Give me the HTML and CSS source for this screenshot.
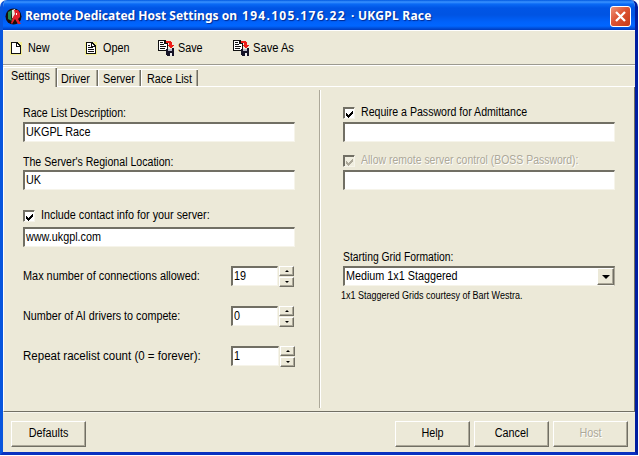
FILE: index.html
```html
<!DOCTYPE html>
<html lang="en">
<head>
<meta charset="utf-8">
<title>Remote Dedicated Host Settings</title>
<link rel="stylesheet" href="styles.css">
</head>
<body>
<svg class="defs" aria-hidden="true">
  <symbol id="new-page" viewBox="0 0 12 14" shape-rendering="crispEdges">
    <path d="M0 1h12v13H0z" fill="#f4ee94"/>
    <path d="M1 1h6l4 4v8H1z" fill="#111"/><path d="M2 2h4v4h4v6H2z" fill="#fff"/><path d="M7 3h1v1h1v1H7z" fill="#fff"/>
  </symbol>
  <symbol id="open-page" viewBox="0 0 12 14" shape-rendering="crispEdges">
    <path d="M0 1h12v13H0z" fill="#f4ee94"/>
    <path d="M1 1h6l4 4v8H1z" fill="#111"/><path d="M2 2h4v4h4v6H2z" fill="#fff"/><path d="M7 3h1v1h1v1H7z" fill="#fff"/>
    <path d="M3 4h2v1H3zM3 6h5v1H3zM3 8h6v1H3zM3 10h6v1H3z" fill="#111"/>
  </symbol>
  <symbol id="save-page" viewBox="0 0 17 16" shape-rendering="crispEdges">
    <path d="M0 0h7l3 3v8H0z" fill="#111"/><path d="M1 1h5v3h3v6H1z" fill="#fff"/>
    <path d="M2 2h3v1H2zM2 4h4v1H2zM2 6h6v1H2zM2 8h5v1H2z" fill="#111"/>
    <path d="M8 1h4l2 2v2h2l-3 4-4-4h2V3H8z" fill="#ed1c18"/>
    <path d="M8 9h1V8h1v3h4V8h2v8H9l-1-1z" fill="#151326"/><path d="M10 9h4v2h-4z" fill="#b9b9c8"/><path d="M12 13h2v3h-2z" fill="#eee"/>
  </symbol>
  <symbol id="tick" viewBox="0 0 7 7"><path d="M0 2v3l2 2 5-5V-1L2 4z" fill="currentColor" shape-rendering="crispEdges"/></symbol>
</svg>
<main class="window">
  <header class="titlebar">
    <svg class="app-icon" viewBox="0 0 17 17">
      <circle cx="8.5" cy="8.5" r="8" fill="#170d0d"/>
      <path d="M3 4l4-2-1 7 1 4-4-2z" fill="#23864a"/><path d="M7 2l3-1 1 3-1 7-3-1z" fill="#e9e5dc"/>
      <path d="M9 2l4 0 2 3v4l-2 2 3 5-3 0-3-5-3 5-1-1 2-6 2-3z" fill="#e2202c"/><path d="M11 5h1v2h-1z" fill="#fff"/>
    </svg>
    <h1><span class="t-name">Remote Dedicated Host Settings on</span><span class="t-ip">194.105.176.22</span><span class="t-race">· UKGPL Race</span></h1>
    <button class="close" aria-label="Close"><svg viewBox="0 0 19 19"><path d="M5 5l9 9M14 5l-9 9" stroke="#fff" stroke-width="2.3"/></svg></button>
  </header>
  <nav class="toolbar">
    <a class="tool tool-new"><svg class="page"><use href="#new-page"/></svg><span>New</span></a>
    <a class="tool tool-open"><svg class="page"><use href="#open-page"/></svg><span>Open</span></a>
    <a class="tool tool-save"><svg class="disk"><use href="#save-page"/></svg><span>Save</span></a>
    <a class="tool tool-saveas"><svg class="disk"><use href="#save-page"/></svg><span>Save As</span></a>
  </nav>
  <div class="tabs">
    <div class="tab active"><span>Settings</span></div>
    <div class="tab driver"><span>Driver</span></div>
    <div class="tab server"><span>Server</span></div>
    <div class="tab races"><span>Race List</span></div>
    <div class="tab-rest"></div>
  </div>
  <section class="panel">
    <div class="col left">
      <div class="label l-desc"><span>Race List Description:</span></div>
      <div class="field"><span>UKGPL Race</span></div>
      <div class="label second l-region"><span>The Server's Regional Location:</span></div>
      <div class="field"><span>UK</span></div>
      <div class="check contact"><i class="box"><svg><use href="#tick"/></svg></i><span>Include contact info for your server:</span></div>
      <div class="field url"><span>www.ukgpl.com</span></div>
      <div class="count"><span class="c-max">Max number of connections allowed:</span><div class="field"><span>19</span></div><div class="spin"><i class="up"></i><i class="down"></i></div></div>
      <div class="count"><span class="c-ai">Number of AI drivers to compete:</span><div class="field"><span>0</span></div><div class="spin"><i class="up"></i><i class="down"></i></div></div>
      <div class="count last"><span class="c-rep">Repeat racelist count (0 = forever):</span><div class="field"><span>1</span></div><div class="spin"><i class="up"></i><i class="down"></i></div></div>
    </div>
    <div class="divider"></div>
    <div class="col right">
      <div class="check require"><i class="box"><svg><use href="#tick"/></svg></i><span>Require a Password for Admittance</span></div>
      <div class="field"></div>
      <div class="check boss disabled"><i class="box"><svg><use href="#tick"/></svg></i><span>Allow remote server control (BOSS Password):</span></div>
      <div class="field"></div>
      <div class="label grid-label"><span>Starting Grid Formation:</span></div>
      <div class="field select"><span>Medium 1x1 Staggered</span><i class="drop"></i></div>
      <div class="note"><span>1x1 Staggered Grids courtesy of Bart Westra.</span></div>
    </div>
  </section>
  <footer class="footer">
    <button class="btn defaults"><span>Defaults</span></button>
    <button class="btn"><span>Help</span></button>
    <button class="btn"><span>Cancel</span></button>
    <button class="btn" disabled><span>Host</span></button>
  </footer>
</main>
</body>
</html>
```
FILE: styles.css
```css
* { box-sizing: border-box; }
body { margin: 0; background: #fff; font: 12px/14px "Liberation Sans", Arial, sans-serif; color: #000; overflow: hidden; }
.defs { display: none; }
span { display: block; white-space: nowrap; transform: scaleX(.9); transform-origin: left; }
.window {
  width: 638px; height: 455px; display: flex; flex-direction: column;
  border: solid; border-width: 0 3px 3px; border-color: #0831d9 #001ea0 #0831c0 #0855dd;
  border-radius: 7px 7px 0 0; background: #ece9d8; overflow: hidden;
}
.titlebar {
  height: 30px; flex: none; margin: 0 -3px; padding: 2px 7px 0 5px; display: flex; align-items: center;
  background: linear-gradient(#0058e0 0, #3a93ff 2px, #0a6af5 4px, #0055e5 8px, #0054e3 15px, #0062fb 22px, #0066ff 26px, #0046cc 29px, #003bbd 30px);
}
.app-icon { width: 17px; height: 17px; margin-right: 3px; flex: none; }
h1 { margin: 0; flex: 1; display: flex; gap: 5px; font: bold 12px/16px "Noto Sans", "Open Sans", sans-serif; color: #fff; text-shadow: 1px 1px 1px #002a91; }
h1 span { transform: none; }
.t-name { width: 212px; }
.t-ip { width: 104px; letter-spacing: 1.3px; }
.t-race { letter-spacing: .25px; }
.close {
  width: 21px; height: 21px; padding: 0; border: 1px solid #fff; border-radius: 3px;
  background: linear-gradient(135deg, #ee9379, #dd5433 45%, #c53a18);
}
.close svg { display: block; width: 19px; height: 19px; }

.toolbar { height: 35px; flex: none; display: flex; border-bottom: 1px solid #9c9a90; border-top: 1px solid #fff; }
.tool { display: flex; align-items: center; }
.tool-new { width: 75px; padding-left: 7px; }
.tool-open { width: 80px; padding-left: 7px; }
.tool-save { width: 75px; }
.page { width: 12px; height: 14px; margin-right: 6px; }
.disk { width: 17px; height: 16px; margin-right: 3px; }
.tool-saveas span { transform: scaleX(.93); }

.tabs { height: 22px; flex: none; display: flex; align-items: flex-end; border-top: 1px solid #fff; }
.tab { height: 18px; padding: 2px 0 0 3px; border: solid #fff; border-width: 1px 0 1px 1px; box-shadow: inset -1px 0 #716f64, inset -2px 0 #aca899; }
.active { height: 20px; width: 54px; padding: 1px 0 0 7px; border-bottom: 0; }
.driver { width: 41px; }
.server { width: 43px; padding-left: 4px; }
.races { width: 57px; padding-left: 5px; }
.tab-rest { flex: 1; align-self: stretch; border-bottom: 1px solid #fff; }

.panel { height: 325px; flex: none; display: flex; border-right: 1px solid #716f64; border-bottom: 1px solid #716f64; border-left: 1px solid #fff; }
.col { width: 272px; padding-top: 19px; }
.left { margin-left: 19px; }
.divider { width: 2px; height: 318px; margin: 3px 22px 0 24px; border-left: 1px solid #aca899; border-right: 1px solid #fff; }
.label { height: 14px; margin-bottom: 2px; }
.l-desc span, .l-region span, .require span { transform: scaleX(.883); }
.field {
  height: 20px; padding: 1px 1px; background: #fff; line-height: 15px;
  border: solid; border-width: 2px 1px 1px 2px; border-color: #716f64 #f6f4ea #f6f4ea #716f64;
}
.second { margin-top: 13px; height: 13px; }
.check { display: flex; align-items: center; height: 14px; margin-bottom: 2px; }
.check span { line-height: 12px; padding-bottom: 2px; }
.box { flex: none; width: 12px; height: 12px; margin-right: 6px; padding: 2px 1px; background: #fff; border: 1px solid; border-color: #716f64 #f6f4ea #f6f4ea #716f64; box-shadow: inset 1px 1px #716f64; display: flex; justify-content: center; }
.box svg { width: 7px; height: 7px; overflow: visible; margin-top: 1px; margin-left: 1px; }
.contact { margin-top: 19px; margin-bottom: 4px; }
.count { display: flex; align-items: center; height: 21px; margin-top: 19px; }
.count > span { flex: none; width: 208px; margin-top: -2px; }
.count > .c-max { transform: scaleX(.908); }
.count > .c-ai { transform: scaleX(.897); }
.count > .c-rep { transform: scaleX(.96); }
.count .field { width: 47px; margin-bottom: 1px; }
.spin { width: 15px; height: 21px; margin-left: 1px; display: grid; grid-template-rows: 10px 10px; gap: 1px; }
.count.last .field { width: 48px; }
.spin i { display: grid; place-items: center; border: 1px solid; border-color: #fff #716f64 #716f64 #fff; box-shadow: inset -1px -1px #aca899; }
.spin i::before { content: ""; border: solid transparent; border-width: 0 2px; }
.spin .up::before { border-bottom: 2px solid #000; }
.spin .down::before { border-top: 2px solid #000; }
.boss { margin-top: 12px; }
.boss span { transform: scaleX(.872); }
.disabled { color: #aca899; text-shadow: 1px 1px #fff; }
.disabled .box { background: #f0eee0; }
.grid-label { margin-top: 60px; }
.grid-label span { transform: scaleX(.862); }
.select { display: flex; justify-content: space-between; padding: 0; border-right-color: #aca899; }
.select span { padding: 1px 1px; }
.drop { width: 17px; height: 17px; background: #ece9d8; border: 1px solid; border-color: #fff #716f64 #716f64 #fff; box-shadow: inset -1px -1px #aca899; display: grid; place-items: center; }
.drop::before { content: ""; border: 4px solid transparent; border-bottom: 0; border-top-color: #000; }
.note { margin: 3px 0 0 -2px; font-size: 10px; }

.footer { flex: 1; display: flex; gap: 4px; padding: 8px 7px 0 8px; border-top: 1px solid #fff8; }
.btn { width: 75px; height: 26px; padding: 0 0 3px; font: inherit; color: #000; background: #ece9d8; border: 1px solid; border-color: #fff #716f64 #716f64 #fff; box-shadow: inset -1px -1px #aca899; }
.btn span { transform-origin: center; }
.btn:disabled { color: #aca899; text-shadow: 1px 1px #fff; }
.defaults { margin-right: auto; }
```
